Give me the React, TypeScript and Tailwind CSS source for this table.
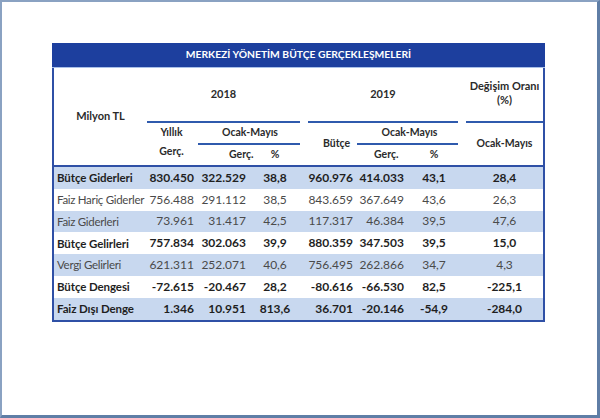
import React from "react";

const rows = [
  { label: "Bütçe Giderleri", v: ["830.450", "322.529", "38,8", "960.976", "414.033", "43,1", "28,4"], bold: true },
  { label: "Faiz Hariç Giderler", v: ["756.488", "291.112", "38,5", "843.659", "367.649", "43,6", "26,3"], bold: false },
  { label: "Faiz Giderleri", v: ["73.961", "31.417", "42,5", "117.317", "46.384", "39,5", "47,6"], bold: false },
  { label: "Bütçe Gelirleri", v: ["757.834", "302.063", "39,9", "880.359", "347.503", "39,5", "15,0"], bold: true },
  { label: "Vergi Gelirleri", v: ["621.311", "252.071", "40,6", "756.495", "262.866", "34,7", "4,3"], bold: false },
  { label: "Bütçe Dengesi", v: ["-72.615", "-20.467", "28,2", "-80.616", "-66.530", "82,5", "-225,1"], bold: true },
  { label: "Faiz Dışı Denge", v: ["1.346", "10.951", "813,6", "36.701", "-20.146", "-54,9", "-284,0"], bold: true },
];

const cols = "grid-cols-[93px_51px_52px_50px_57px_53px_48px_85px]";

export default function App() {
  return (
    <div
      className="w-[600px] h-[418px] bg-white border-t-2 border-l-2 border-r-[3px] border-b-[3px] border-t-[#8aa2c2] border-l-[#8aa2c2] border-r-[#5f7ea6] border-b-[#5f7ea6] pt-[41px] pl-[50px]"
      style={{ fontFamily: "Lato, 'Open Sans', sans-serif" }}
    >
      <div className="w-[493px]">
        <div className="h-[24px] bg-[#1d3f9e] flex items-center justify-center text-white font-bold text-[10.3px]">
          MERKEZİ YÖNETİM BÜTÇE GERÇEKLEŞMELERİ
        </div>
        <div className="h-px bg-[#a9c0e8]" />
        <div className="border-x-2 border-b-2 border-[#2f50a6]">
          {/* header */}
          <div className={`grid ${cols} grid-rows-[55px_22px_20px] text-[10.5px] font-bold text-[#2b2b2b]`}>
            <div className="row-span-3 flex items-center justify-center text-[11px]">Milyon TL</div>
            <div className="col-span-3 flex items-center justify-center border-b-2 border-[#2f5aad] pb-[1px] text-[11px]">2018</div>
            <div className="col-span-3 ml-[8px] flex items-center justify-center border-b-2 border-[#2f5aad] pb-[1px] text-[11px]">2019</div>
            <div className="ml-[8px] flex flex-col items-center justify-center border-b-2 border-[#2f5aad] leading-[14px] pb-[3px] text-[11px]">
              <span className="whitespace-nowrap">Değişim Oranı</span>
              <span>(%)</span>
            </div>
            <div className="row-span-2 col-start-2 row-start-2 flex flex-col items-center justify-center leading-[19px] pb-[4px] pr-[2px]">
              <span>Yıllık</span>
              <span>Gerç.</span>
            </div>
            <div className="col-span-2 col-start-3 row-start-2 flex items-center justify-center border-b-2 border-[#2f5aad] pl-[2px]">
              Ocak-Mayıs
            </div>
            <div className="col-start-3 row-start-3 flex items-center pl-[31px] whitespace-nowrap">Gerç.</div>
            <div className="col-start-4 row-start-3 flex items-center justify-center">%</div>
            <div className="row-span-2 col-start-5 row-start-2 flex items-center pl-[23px]">Bütçe</div>
            <div className="col-span-2 col-start-6 row-start-2 flex items-center justify-center border-b-2 border-[#2f5aad] pl-[4px]">
              Ocak-Mayıs
            </div>
            <div className="col-start-6 row-start-3 flex items-center pl-[17px] whitespace-nowrap">Gerç.</div>
            <div className="col-start-7 row-start-3 flex items-center justify-center">%</div>
            <div className="row-span-2 col-start-8 row-start-2 flex items-center justify-center pl-[8px]">Ocak-Mayıs</div>
          </div>
          <div className="h-[2px] bg-[#2f50a6]" />
          {/* body */}
          {rows.map((r, i) => (
            <div
              key={r.label}
              className={`grid ${cols} h-[21.8px] items-center text-[12px] ${i % 2 === 0 ? "bg-[#c8d8ef]" : "bg-white"} ${r.bold ? "font-bold text-[#1f1f1f]" : "font-normal text-[#4a4a4a]"}`}
            >
              <div className={`pl-[3px] whitespace-nowrap text-[11.5px] ${r.bold ? "tracking-[-0.1px]" : "tracking-[-0.3px]"}`}>{r.label}</div>
              <div className="text-right pr-[4px]">{r.v[0]}</div>
              <div className="text-right pr-[4px]">{r.v[1]}</div>
              <div className="text-center">{r.v[2]}</div>
              <div className="text-right pr-[4px]">{r.v[3]}</div>
              <div className="text-right pr-[6px]">{r.v[4]}</div>
              <div className="text-center">{r.v[5]}</div>
              <div className="text-center pl-[8px]">{r.v[6]}</div>
            </div>
          ))}
        </div>
      </div>
    </div>
  );
}
